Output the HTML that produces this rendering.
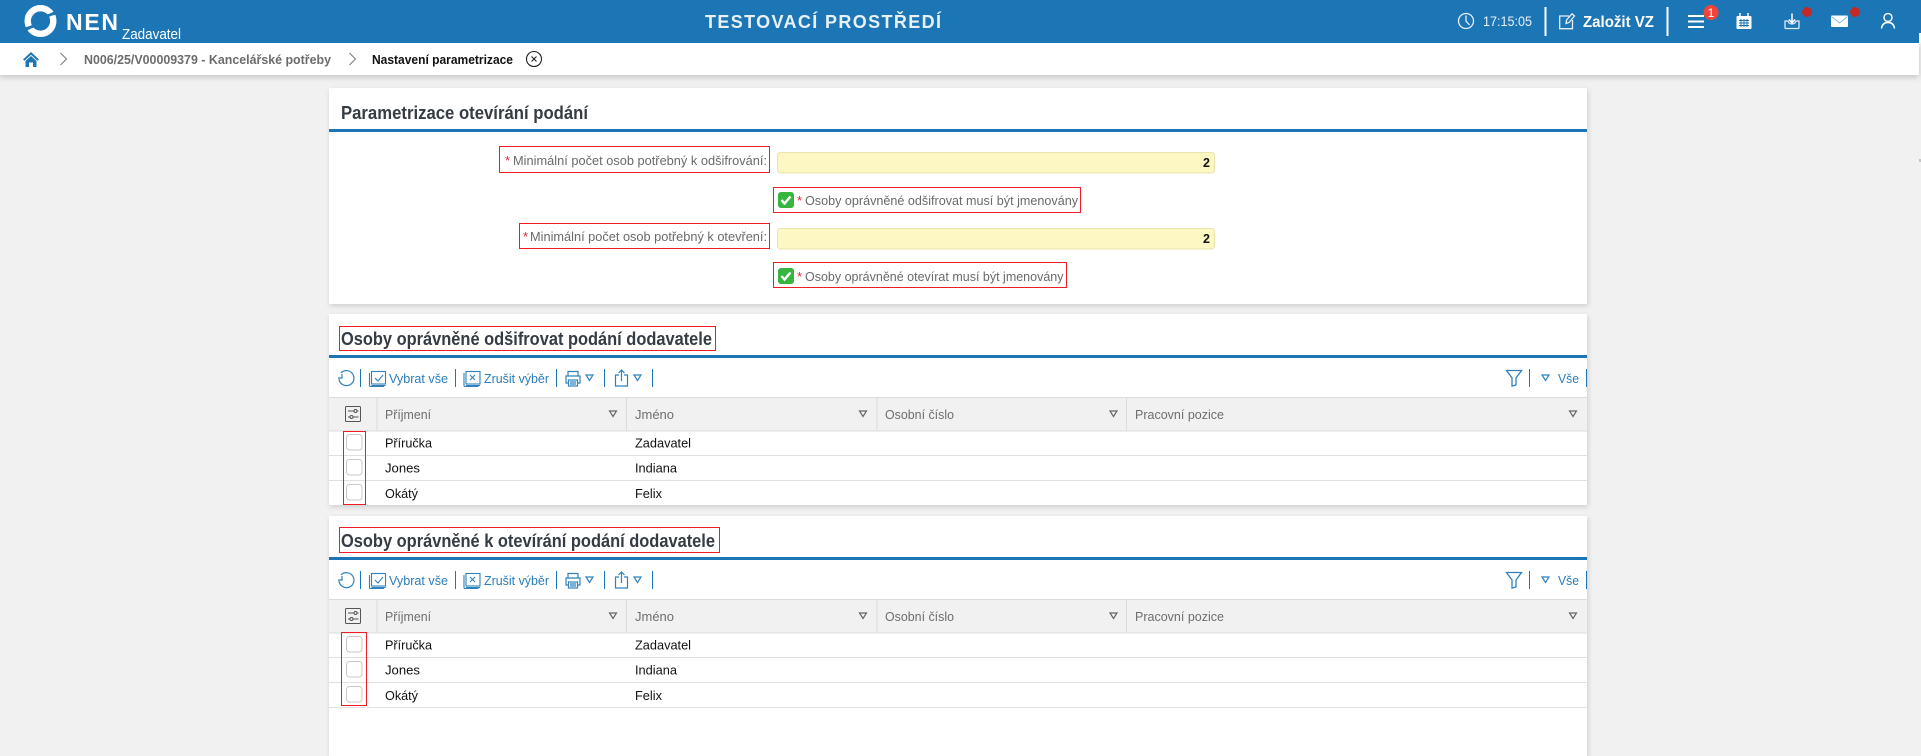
<!DOCTYPE html>
<html lang="cs"><head><meta charset="utf-8"><title>Nastavení parametrizace</title>
<style>
html,body{margin:0;padding:0;width:1921px;height:750px;overflow:hidden;background:#f1f1f1}
.c{position:absolute;left:329px;width:1258px;background:#fff;box-shadow:1px 2px 5px rgba(0,0,0,.15)}
svg{position:absolute;left:0;top:0}
text{font-family:"Liberation Sans",sans-serif}
</style></head><body>
<div style="position:absolute;left:0;top:43px;width:1919px;height:32px;background:#fff;box-shadow:0 2px 6px rgba(0,0,0,.2)"></div>
<div class="c" style="top:88px;height:216px"></div>
<div class="c" style="top:314px;height:191px"></div>
<div class="c" style="top:516px;height:240px"></div>
<svg width="1921" height="750" viewBox="0 0 1921 750" xmlns="http://www.w3.org/2000/svg">
<defs>
<g id="refresh" fill="none" stroke="#2f82bd" stroke-width="1.2"><path d="M341 373A7.5 7.5 0 1 1 339 379"/><path d="M338 376H342V372" transform="translate(0 2)"/></g>
<g id="sel" fill="none" stroke="#2f82bd" stroke-width="1.1"><rect x="371.5" y="371.5" width="14" height="12.5"/><path d="M371.5 385.5H385.5M369.5 373V385.5Q369.5 386.5 371 386.5H384"/></g>
<path id="tri" d="M0 0H7L3.500 5.500Z" fill="none" stroke-width="1.200"/>
<g id="print" fill="none" stroke="#2f82bd" stroke-width="1.200"><path d="M568 376V371.500H578V376M568 383H566V376H580V383H578"/><rect x="568.500" y="380" width="9" height="6"/><path d="M570 382H576M570 384H576"/></g>
<g id="share" fill="none" stroke="#2f82bd" stroke-width="1.200"><path d="M619 375H615.500V386H627.500V375H624"/><path d="M621.500 381V370M618.500 373L621.500 370L624.500 373"/></g>
<g id="funnel" fill="none" stroke="#2f82bd" stroke-width="1.300"><path d="M506.500 370.500H521.500L516 378V385L512 386V378Z" transform="translate(1000 0)"/></g>
<g id="cfg" fill="none" stroke="#555" stroke-width="1"><rect x="345.500" y="406.500" width="15" height="15" rx="1"/><path d="M348 411H354M357 411H358.500M348 417H350M353 417H358.500"/><circle cx="355.500" cy="411" r="1.500"/><circle cx="351.500" cy="417" r="1.500"/></g>
<rect id="cb" width="15.500" height="15.500" rx="3" fill="#fff" stroke="#c8c8c8"/>
<g id="chk"><rect width="16" height="16" rx="3" fill="#37b63f"/><path d="M3.500 8L6.500 11.500L12.500 4.500" fill="none" stroke="#fff" stroke-width="2.400"/></g>
</defs>

<!-- top bar -->
<rect width="1921" height="43" fill="#1c75b5"/>
<rect x="1919" y="33" width="2" height="10" fill="#fff"/>
<path d="M1920 159v3" stroke="#999"/>
<circle cx="40.500" cy="21" r="12.800" fill="none" stroke="#fff" stroke-width="6.400"/>
<path d="M47 14.500Q52 13 58 9L59 15Q53 14.500 49 17Z" fill="#1c75b5"/>
<path d="M34 27.500Q29 29 23 33L22 27Q28 27.500 32 25Z" fill="#1c75b5"/>
<text x="66" y="30" font-size="23" font-weight="700" fill="#fff" textLength="52" lengthAdjust="spacing">NEN</text>
<text x="122" y="39" font-size="15" fill="#fff" textLength="59" lengthAdjust="spacingAndGlyphs">Zadavatel</text>
<text x="705" y="28" font-size="18" font-weight="700" fill="#e8f1f8" textLength="236" lengthAdjust="spacing">TESTOVACÍ PROSTŘEDÍ</text>

<g fill="none" stroke="#e6f0f7" stroke-width="1.300">
<circle cx="1466" cy="21" r="7.500"/><path d="M1466 15.500V21L1469.500 25"/>
<path d="M1569 16H1559.700V28.700H1572.500V20"/><path d="M1566 23.500L1566.500 20L1572 13.800L1574.500 16L1569 22.500Z"/>
</g>
<text x="1483" y="26" font-size="14" fill="#e8f1f8" textLength="49" lengthAdjust="spacingAndGlyphs">17:15:05</text>
<rect x="1544.500" y="7" width="2" height="29" fill="#fff"/>
<text x="1583" y="27" font-size="16" font-weight="700" fill="#fff" textLength="71" lengthAdjust="spacingAndGlyphs">Založit VZ</text>
<rect x="1666.500" y="7" width="2" height="29" fill="#fff"/>
<path d="M1688 16H1704M1688 21.500H1704M1688 27H1704" stroke="#fff" stroke-width="2" fill="none"/>
<circle cx="1711" cy="12.500" r="7.500" fill="#f44336"/>
<text x="1711" y="17" font-size="12" fill="#fff" text-anchor="middle">1</text>
<rect x="1736.500" y="16" width="15" height="13" rx="1" fill="#fff"/>
<path d="M1740 13V17M1748 13V17" stroke="#fff" stroke-width="1.500"/>
<path d="M1739 20.500H1749M1739 23H1749M1739 25.500H1749M1741 19V27M1744 19V27M1747 19V27" stroke="#1c75b5" stroke-width="1" fill="none"/>
<path d="M1792 13.500V22M1789 19.500L1792 23L1795 19.500" stroke="#fff" stroke-width="1.500" fill="none"/>
<path d="M1788 21H1785V27.500Q1785 28.500 1786 28.500H1798Q1799 28.500 1799 27.500V21H1796C1795 25 1789 25 1788 21Z" fill="none" stroke="#dcebf5" stroke-width="1.300"/>
<circle cx="1807" cy="12" r="5" fill="#c62828"/>
<rect x="1831" y="15.500" width="17" height="11.500" rx="1" fill="#fff"/>
<path d="M1831.500 16.500L1839.500 23L1847.500 16.500" fill="none" stroke="#8cbde0" stroke-width="1"/>
<circle cx="1855" cy="12" r="5" fill="#c62828"/>
<circle cx="1888" cy="17.500" r="4" fill="none" stroke="#fff" stroke-width="1.400"/>
<path d="M1881.500 28.500C1882 24.500 1884.500 22.500 1888 22.500C1891.500 22.500 1894 24.500 1894.500 28.500" fill="none" stroke="#fff" stroke-width="1.400"/>

<!-- breadcrumb -->
<path d="M23 59.500L31 52L39 59.500L37.500 60.700L31 54.700L24.500 60.700Z" fill="#1c75b5"/>
<path d="M25.500 61L31 56L36.500 61V67H33V62.500H29V67H25.500Z" fill="#1c75b5"/>
<path d="M60.500 53L66.500 59L60.500 65" fill="none" stroke="#777" stroke-width="1"/>
<text x="84" y="64" font-size="12.500" font-weight="700" fill="#6c6c6c" textLength="247" lengthAdjust="spacingAndGlyphs">N006/25/V00009379 - Kancelářské potřeby</text>
<path d="M349.500 53L355.500 59L349.500 65" fill="none" stroke="#777" stroke-width="1"/>
<text x="372" y="64" font-size="12.500" font-weight="700" fill="#111" textLength="141" lengthAdjust="spacingAndGlyphs">Nastavení parametrizace</text>
<circle cx="534" cy="59" r="7.500" fill="none" stroke="#222" stroke-width="1.100"/>
<path d="M531.500 56.500L536.500 61.500M536.500 56.500L531.500 61.500" stroke="#222" stroke-width="1.100"/>

<!-- card 1 -->
<text x="341" y="119" font-size="18" font-weight="700" fill="#363c44" textLength="247" lengthAdjust="spacingAndGlyphs">Parametrizace otevírání podání</text>
<rect x="329" y="129" width="1258" height="3" fill="#1c75b5"/>

<rect x="777.500" y="152.500" width="437" height="20.500" rx="3" fill="#fdf8c3" stroke="#e9e3ac"/>
<rect x="777.500" y="228.500" width="437" height="20.500" rx="3" fill="#fdf8c3" stroke="#e9e3ac"/>
<text x="1210" y="167" font-size="12.500" font-weight="700" fill="#111" text-anchor="end">2</text>
<text x="1210" y="243" font-size="12.500" font-weight="700" fill="#111" text-anchor="end">2</text>

<g font-size="13" fill="#6a6a6a">
<text x="505" y="165" fill="#e0243a">*</text>
<text x="513" y="165" textLength="254" lengthAdjust="spacingAndGlyphs">Minimální počet osob potřebný k odšifrování:</text>
<text x="523" y="241" fill="#e0243a">*</text>
<text x="530" y="241" textLength="237" lengthAdjust="spacingAndGlyphs">Minimální počet osob potřebný k otevření:</text>
<text x="797" y="205" fill="#e0243a">*</text>
<text x="805" y="205" textLength="273" lengthAdjust="spacingAndGlyphs">Osoby oprávněné odšifrovat musí být jmenovány</text>
<text x="797" y="281" fill="#e0243a">*</text>
<text x="805" y="281" textLength="258.500" lengthAdjust="spacingAndGlyphs">Osoby oprávněné otevírat musí být jmenovány</text>
</g>
<use href="#chk" x="778" y="192"/>
<use href="#chk" x="778" y="268"/>

<!-- titles -->
<text x="341" y="345" font-size="18" font-weight="700" fill="#363c44" textLength="371" lengthAdjust="spacingAndGlyphs">Osoby oprávněné odšifrovat podání dodavatele</text>
<text x="341" y="547" font-size="18" font-weight="700" fill="#363c44" textLength="374" lengthAdjust="spacingAndGlyphs">Osoby oprávněné k otevírání podání dodavatele</text>

<!-- table 1 -->
<g>
<rect x="329" y="355" width="1258" height="3" fill="#1c75b5"/>
<use href="#refresh"/>
<path d="M360.500 369V387M455.500 369V387M556.500 369V387M604.500 369V387M652.500 369V387M1529.500 369V387M1586.500 369V387" stroke="#1c75b5"/>
<use href="#sel"/>
<path d="M375 378L378 381L383 375" fill="none" stroke="#2f82bd" stroke-width="1.100"/>
<text x="389" y="383" font-size="13" fill="#2a7db8" textLength="59" lengthAdjust="spacingAndGlyphs">Vybrat vše</text>
<use href="#sel" x="94.500"/>
<path d="M470 375L475 380M475 375L470 380" fill="none" stroke="#2f82bd" stroke-width="1.100"/>
<text x="484" y="383" font-size="13" fill="#2a7db8" textLength="65" lengthAdjust="spacingAndGlyphs">Zrušit výběr</text>
<use href="#print"/>
<use href="#tri" x="586" y="375" stroke="#2f82bd"/>
<use href="#share"/>
<use href="#tri" x="634" y="375" stroke="#2f82bd"/>
<use href="#funnel" x="0"/>
<use href="#tri" x="1542" y="375" stroke="#2f82bd"/>
<text x="1558" y="383" font-size="13" fill="#2a7db8" textLength="21" lengthAdjust="spacingAndGlyphs">Vše</text>

<rect x="329" y="397.500" width="1258" height="33.500" fill="#f1f1f1"/>
<path d="M329 397.500H1587M329 431H1587M377 398V431M626.500 398V431M877 398V431M1126.500 398V431" stroke="#dcdcdc" fill="none"/>
<use href="#cfg"/>
<g font-size="13" fill="#6e6e6e">
<text x="385" y="419" textLength="46" lengthAdjust="spacingAndGlyphs">Příjmení</text>
<text x="635" y="419" textLength="39" lengthAdjust="spacingAndGlyphs">Jméno</text>
<text x="885" y="419" textLength="69" lengthAdjust="spacingAndGlyphs">Osobní číslo</text>
<text x="1135" y="419" textLength="89" lengthAdjust="spacingAndGlyphs">Pracovní pozice</text>
</g>
<g stroke="#666">
<use href="#tri" x="609.500" y="411"/><use href="#tri" x="859.500" y="411"/><use href="#tri" x="1110" y="411"/><use href="#tri" x="1569.500" y="411"/>
</g>
<path d="M329 455.500H1587M329 480.500H1587" stroke="#e0e0e0"/>
<use href="#cb" x="346.500" y="434.500"/><use href="#cb" x="346.500" y="459.500"/><use href="#cb" x="346.500" y="484.500"/>
<g font-size="13" fill="#111">
<text x="385" y="447.500" textLength="47" lengthAdjust="spacingAndGlyphs">Příručka</text>
<text x="635" y="447.500" textLength="56" lengthAdjust="spacingAndGlyphs">Zadavatel</text>
<text x="385" y="472.500" textLength="35" lengthAdjust="spacingAndGlyphs">Jones</text>
<text x="635" y="472.500" textLength="42" lengthAdjust="spacingAndGlyphs">Indiana</text>
<text x="385" y="498" textLength="33" lengthAdjust="spacingAndGlyphs">Okátý</text>
<text x="635" y="498" textLength="27" lengthAdjust="spacingAndGlyphs">Felix</text>
</g>
</g>

<!-- table 2 -->
<g transform="translate(0 202)">
<rect x="329" y="355" width="1258" height="3" fill="#1c75b5"/>
<use href="#refresh"/>
<path d="M360.500 369V387M455.500 369V387M556.500 369V387M604.500 369V387M652.500 369V387M1529.500 369V387M1586.500 369V387" stroke="#1c75b5"/>
<use href="#sel"/>
<path d="M375 378L378 381L383 375" fill="none" stroke="#2f82bd" stroke-width="1.100"/>
<text x="389" y="383" font-size="13" fill="#2a7db8" textLength="59" lengthAdjust="spacingAndGlyphs">Vybrat vše</text>
<use href="#sel" x="94.500"/>
<path d="M470 375L475 380M475 375L470 380" fill="none" stroke="#2f82bd" stroke-width="1.100"/>
<text x="484" y="383" font-size="13" fill="#2a7db8" textLength="65" lengthAdjust="spacingAndGlyphs">Zrušit výběr</text>
<use href="#print"/>
<use href="#tri" x="586" y="375" stroke="#2f82bd"/>
<use href="#share"/>
<use href="#tri" x="634" y="375" stroke="#2f82bd"/>
<use href="#funnel" x="0"/>
<use href="#tri" x="1542" y="375" stroke="#2f82bd"/>
<text x="1558" y="383" font-size="13" fill="#2a7db8" textLength="21" lengthAdjust="spacingAndGlyphs">Vše</text>

<rect x="329" y="397.500" width="1258" height="33.500" fill="#f1f1f1"/>
<path d="M329 397.500H1587M329 431H1587M377 398V431M626.500 398V431M877 398V431M1126.500 398V431" stroke="#dcdcdc" fill="none"/>
<use href="#cfg"/>
<g font-size="13" fill="#6e6e6e">
<text x="385" y="419" textLength="46" lengthAdjust="spacingAndGlyphs">Příjmení</text>
<text x="635" y="419" textLength="39" lengthAdjust="spacingAndGlyphs">Jméno</text>
<text x="885" y="419" textLength="69" lengthAdjust="spacingAndGlyphs">Osobní číslo</text>
<text x="1135" y="419" textLength="89" lengthAdjust="spacingAndGlyphs">Pracovní pozice</text>
</g>
<g stroke="#666">
<use href="#tri" x="609.500" y="411"/><use href="#tri" x="859.500" y="411"/><use href="#tri" x="1110" y="411"/><use href="#tri" x="1569.500" y="411"/>
</g>
<path d="M329 455.500H1587M329 480.500H1587M329 505.500H1587" stroke="#e0e0e0"/>
<use href="#cb" x="346.500" y="434.500"/><use href="#cb" x="346.500" y="459.500"/><use href="#cb" x="346.500" y="484.500"/>
<g font-size="13" fill="#111">
<text x="385" y="447.500" textLength="47" lengthAdjust="spacingAndGlyphs">Příručka</text>
<text x="635" y="447.500" textLength="56" lengthAdjust="spacingAndGlyphs">Zadavatel</text>
<text x="385" y="472.500" textLength="35" lengthAdjust="spacingAndGlyphs">Jones</text>
<text x="635" y="472.500" textLength="42" lengthAdjust="spacingAndGlyphs">Indiana</text>
<text x="385" y="498" textLength="33" lengthAdjust="spacingAndGlyphs">Okátý</text>
<text x="635" y="498" textLength="27" lengthAdjust="spacingAndGlyphs">Felix</text>
</g>
</g>

<!-- red annotation boxes -->
<g fill="none" stroke="#ee1c25" stroke-width="1">
<rect x="499.500" y="146.500" width="270" height="26"/>
<rect x="773.500" y="187.500" width="307" height="25"/>
<rect x="519.500" y="223.500" width="250" height="25"/>
<rect x="773.500" y="262.500" width="293" height="25"/>
<rect x="339.500" y="326.500" width="376" height="24"/>
<rect x="343.500" y="431.500" width="22" height="73"/>
<rect x="339.500" y="527.500" width="380" height="25"/>
<rect x="341.500" y="632.500" width="25" height="73"/>
</g>
</svg>
</body></html>
